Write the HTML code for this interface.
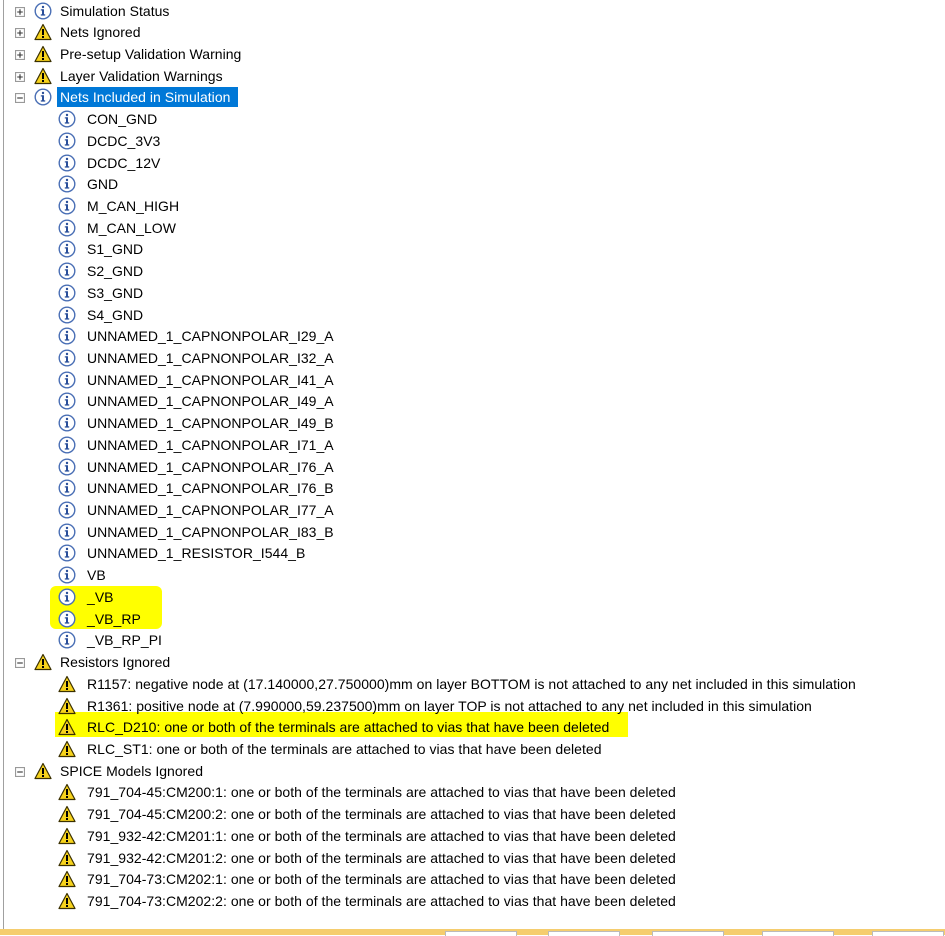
<!DOCTYPE html>
<html><head><meta charset="utf-8"><style>
body{margin:0;width:945px;height:935px;background:#fff;position:relative;overflow:hidden;font-family:"Liberation Sans",Arial,sans-serif;font-size:14px;color:#000}
.vl{position:absolute;left:3px;top:0;width:1px;height:929px;background:#a0a0a0}
.tree{position:absolute;left:0;top:0.5px;width:945px}
.r{height:21.73px;position:relative;white-space:nowrap}
.r svg{position:absolute;top:1px}
.t{position:absolute;top:2px;line-height:17px;letter-spacing:0.03px}
.top .ex{left:15px;top:6px}
.top .ic{left:34px}
.top .t{left:60px}
.ch .ic{left:58px}
.ch .t{left:87px}
.sel{background:#0078d7;color:#fff;padding:2px 8px 2px 3px;margin-left:-3px}
.hl{position:absolute;background:#ffff00}
.bar{position:absolute;left:0;top:929px;width:945px;height:6px;background:#f5cd6e}
.btn{position:absolute;top:931px;height:4px;background:#fff;border:1px solid #bbb;border-bottom:none}
</style></head><body>
<svg width="0" height="0" style="position:absolute"><defs>
<symbol id="i" viewBox="0 0 18 18"><circle cx="9" cy="9" r="7.8" fill="#fff" stroke="#4a6fb5" stroke-width="1.4"/><circle cx="9" cy="5" r="1.2" fill="#2a4f9a"/><rect x="8" y="7.3" width="2" height="6" fill="#2a4f9a"/><rect x="6.8" y="12.3" width="4.4" height="1.3" fill="#2a4f9a"/><rect x="6.8" y="7.3" width="2.5" height="1.2" fill="#2a4f9a"/></symbol>
<symbol id="w" viewBox="0 0 18 18"><path d="M9 1.5 L17 16.5 L1 16.5 Z" fill="#f7d31c" stroke="#3a3000" stroke-width="1.2" stroke-linejoin="round"/><rect x="8" y="6" width="2" height="6" fill="#000"/><rect x="8" y="13" width="2" height="2" fill="#000"/></symbol>
<symbol id="p" viewBox="0 0 9 9"><rect x="0.5" y="0.5" width="8" height="8" fill="#fff" stroke="#999"/><path d="M2 4.5H7M4.5 2V7" stroke="#333"/></symbol>
<symbol id="m" viewBox="0 0 9 9"><rect x="0.5" y="0.5" width="8" height="8" fill="#fff" stroke="#999"/><path d="M2 4.5H7" stroke="#333"/></symbol>
</defs></svg>
<div class="hl" style="left:50px;top:586px;width:112px;height:43px;border-radius:6px"></div>
<div class="hl" style="left:55px;top:712px;width:573px;height:25px"></div>
<div class="vl"></div>
<div class="tree">
<div class="r top"><svg class="ex" width="10" height="10"><use href="#p"/></svg><svg class="ic" width="18" height="18"><use href="#i"/></svg><span class="t">Simulation Status</span></div>
<div class="r top"><svg class="ex" width="10" height="10"><use href="#p"/></svg><svg class="ic" width="18" height="18"><use href="#w"/></svg><span class="t">Nets Ignored</span></div>
<div class="r top"><svg class="ex" width="10" height="10"><use href="#p"/></svg><svg class="ic" width="18" height="18"><use href="#w"/></svg><span class="t">Pre-setup Validation Warning</span></div>
<div class="r top"><svg class="ex" width="10" height="10"><use href="#p"/></svg><svg class="ic" width="18" height="18"><use href="#w"/></svg><span class="t">Layer Validation Warnings</span></div>
<div class="r top"><svg class="ex" width="10" height="10"><use href="#m"/></svg><svg class="ic" width="18" height="18"><use href="#i"/></svg><span class="t"><span class="sel">Nets Included in Simulation</span></span></div>
<div class="r ch"><svg class="ic" width="18" height="18"><use href="#i"/></svg><span class="t">CON_GND</span></div>
<div class="r ch"><svg class="ic" width="18" height="18"><use href="#i"/></svg><span class="t">DCDC_3V3</span></div>
<div class="r ch"><svg class="ic" width="18" height="18"><use href="#i"/></svg><span class="t">DCDC_12V</span></div>
<div class="r ch"><svg class="ic" width="18" height="18"><use href="#i"/></svg><span class="t">GND</span></div>
<div class="r ch"><svg class="ic" width="18" height="18"><use href="#i"/></svg><span class="t">M_CAN_HIGH</span></div>
<div class="r ch"><svg class="ic" width="18" height="18"><use href="#i"/></svg><span class="t">M_CAN_LOW</span></div>
<div class="r ch"><svg class="ic" width="18" height="18"><use href="#i"/></svg><span class="t">S1_GND</span></div>
<div class="r ch"><svg class="ic" width="18" height="18"><use href="#i"/></svg><span class="t">S2_GND</span></div>
<div class="r ch"><svg class="ic" width="18" height="18"><use href="#i"/></svg><span class="t">S3_GND</span></div>
<div class="r ch"><svg class="ic" width="18" height="18"><use href="#i"/></svg><span class="t">S4_GND</span></div>
<div class="r ch"><svg class="ic" width="18" height="18"><use href="#i"/></svg><span class="t">UNNAMED_1_CAPNONPOLAR_I29_A</span></div>
<div class="r ch"><svg class="ic" width="18" height="18"><use href="#i"/></svg><span class="t">UNNAMED_1_CAPNONPOLAR_I32_A</span></div>
<div class="r ch"><svg class="ic" width="18" height="18"><use href="#i"/></svg><span class="t">UNNAMED_1_CAPNONPOLAR_I41_A</span></div>
<div class="r ch"><svg class="ic" width="18" height="18"><use href="#i"/></svg><span class="t">UNNAMED_1_CAPNONPOLAR_I49_A</span></div>
<div class="r ch"><svg class="ic" width="18" height="18"><use href="#i"/></svg><span class="t">UNNAMED_1_CAPNONPOLAR_I49_B</span></div>
<div class="r ch"><svg class="ic" width="18" height="18"><use href="#i"/></svg><span class="t">UNNAMED_1_CAPNONPOLAR_I71_A</span></div>
<div class="r ch"><svg class="ic" width="18" height="18"><use href="#i"/></svg><span class="t">UNNAMED_1_CAPNONPOLAR_I76_A</span></div>
<div class="r ch"><svg class="ic" width="18" height="18"><use href="#i"/></svg><span class="t">UNNAMED_1_CAPNONPOLAR_I76_B</span></div>
<div class="r ch"><svg class="ic" width="18" height="18"><use href="#i"/></svg><span class="t">UNNAMED_1_CAPNONPOLAR_I77_A</span></div>
<div class="r ch"><svg class="ic" width="18" height="18"><use href="#i"/></svg><span class="t">UNNAMED_1_CAPNONPOLAR_I83_B</span></div>
<div class="r ch"><svg class="ic" width="18" height="18"><use href="#i"/></svg><span class="t">UNNAMED_1_RESISTOR_I544_B</span></div>
<div class="r ch"><svg class="ic" width="18" height="18"><use href="#i"/></svg><span class="t">VB</span></div>
<div class="r ch"><svg class="ic" width="18" height="18"><use href="#i"/></svg><span class="t">_VB</span></div>
<div class="r ch"><svg class="ic" width="18" height="18"><use href="#i"/></svg><span class="t">_VB_RP</span></div>
<div class="r ch"><svg class="ic" width="18" height="18"><use href="#i"/></svg><span class="t">_VB_RP_PI</span></div>
<div class="r top"><svg class="ex" width="10" height="10"><use href="#m"/></svg><svg class="ic" width="18" height="18"><use href="#w"/></svg><span class="t">Resistors Ignored</span></div>
<div class="r ch"><svg class="ic" width="18" height="18"><use href="#w"/></svg><span class="t">R1157: negative node at (17.140000,27.750000)mm on layer BOTTOM is not attached to any net included in this simulation</span></div>
<div class="r ch"><svg class="ic" width="18" height="18"><use href="#w"/></svg><span class="t">R1361: positive node at (7.990000,59.237500)mm on layer TOP is not attached to any net included in this simulation</span></div>
<div class="r ch"><svg class="ic" width="18" height="18"><use href="#w"/></svg><span class="t">RLC_D210: one or both of the terminals are attached to vias that have been deleted</span></div>
<div class="r ch"><svg class="ic" width="18" height="18"><use href="#w"/></svg><span class="t">RLC_ST1: one or both of the terminals are attached to vias that have been deleted</span></div>
<div class="r top"><svg class="ex" width="10" height="10"><use href="#m"/></svg><svg class="ic" width="18" height="18"><use href="#w"/></svg><span class="t">SPICE Models Ignored</span></div>
<div class="r ch"><svg class="ic" width="18" height="18"><use href="#w"/></svg><span class="t">791_704-45:CM200:1: one or both of the terminals are attached to vias that have been deleted</span></div>
<div class="r ch"><svg class="ic" width="18" height="18"><use href="#w"/></svg><span class="t">791_704-45:CM200:2: one or both of the terminals are attached to vias that have been deleted</span></div>
<div class="r ch"><svg class="ic" width="18" height="18"><use href="#w"/></svg><span class="t">791_932-42:CM201:1: one or both of the terminals are attached to vias that have been deleted</span></div>
<div class="r ch"><svg class="ic" width="18" height="18"><use href="#w"/></svg><span class="t">791_932-42:CM201:2: one or both of the terminals are attached to vias that have been deleted</span></div>
<div class="r ch"><svg class="ic" width="18" height="18"><use href="#w"/></svg><span class="t">791_704-73:CM202:1: one or both of the terminals are attached to vias that have been deleted</span></div>
<div class="r ch"><svg class="ic" width="18" height="18"><use href="#w"/></svg><span class="t">791_704-73:CM202:2: one or both of the terminals are attached to vias that have been deleted</span></div>
</div>
<div class="bar"></div>
<div class="btn" style="left:445px;width:70px"></div>
<div class="btn" style="left:548px;width:70px"></div>
<div class="btn" style="left:652px;width:70px"></div>
<div class="btn" style="left:762px;width:70px"></div>
<div class="btn" style="left:872px;width:70px"></div>
</body></html>
